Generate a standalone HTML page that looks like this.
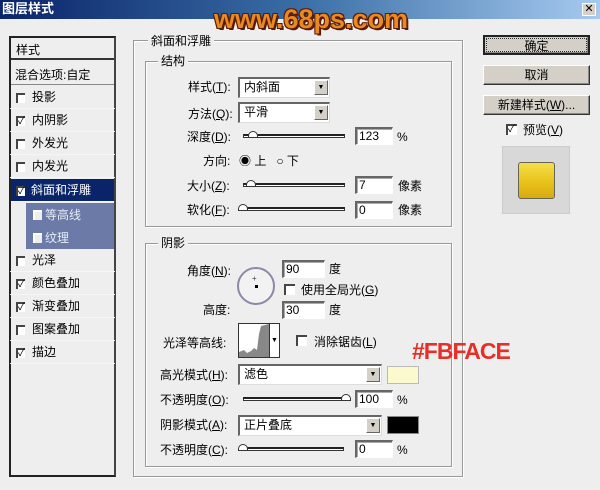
<!DOCTYPE html>
<html><head><meta charset="utf-8"><style>
*{margin:0;padding:0;box-sizing:border-box}
body{width:600px;height:490px;background:#eeeeee;position:relative;overflow:hidden;font-family:"Liberation Sans","Noto Sans CJK SC","WenQuanYi Zen Hei",sans-serif;font-size:12px;color:#000}
.a{position:absolute}
.t{position:absolute;white-space:nowrap;line-height:14px}
.title{left:0;top:0;width:600px;height:19px;background:linear-gradient(90deg,#0a246a,#3a6ea5 50%,#a6caf0)}
.frame{position:absolute;border:1px solid #999;box-shadow:1px 1px 0 #fff,inset 1px 1px 0 #fff}
.lbl{position:absolute;background:#eeeeee;padding:0 3px;line-height:14px}
.inp{position:absolute;background:#fff;border:1px solid #fff;border-top:2px solid #666;border-left:2px solid #666;box-shadow:inset 1px 1px 0 #aaa;padding-left:2px;line-height:14px;font-size:12px}
.dd{position:absolute;background:#fff;border-top:2px solid #666;border-left:2px solid #666;border-right:1px solid #ddd;border-bottom:1px solid #ddd;padding-left:4px;line-height:17px}
.dd b{position:absolute;right:1px;top:1px;width:14px;height:15px;background:#d4d0c8;border:1px solid;border-color:#fff #666 #666 #fff;font-size:7px;text-align:center;line-height:14px;font-weight:normal}
.sl{position:absolute;height:4px;border:1px solid #333;border-top:2px solid #222;background:#fff}
.th{position:absolute;width:10px;height:7px;border:1px solid #333;background:#fff;border-radius:5px 5px 0 0}
.btn{position:absolute;left:483px;width:107px;height:20px;background:#d4d0c8;border:1px solid;border-color:#fff #333 #333 #fff;box-shadow:inset -1px -1px 0 #888;text-align:center;line-height:18px}
.cb{position:absolute;width:9px;height:10px;border-left:2px solid #444;border-top:2px solid #444;background:#fff;font-size:10px;line-height:8px;color:#000}
.it{position:absolute;left:10px;width:105px;height:23px;line-height:23px;padding-left:22px;border-bottom:1px solid #f6f6f6}
.it .cb{left:6px;top:7px}
</style></head><body>
<div class="a title"></div>
<div class="t" style="left:2px;top:2px;color:#fff;font-weight:bold;font-size:13px">图层样式</div>
<div class="a" style="left:582px;top:3px;width:14px;height:13px;background:#d4d0c8;border:1px solid #fff;font-size:11px;line-height:11px;text-align:center">✕</div>
<div class="t" style="left:214px;top:6px;font-size:27px;line-height:26px;font-weight:bold;color:#e88a22;letter-spacing:0px;text-shadow:-1px -1px 0 #5a1a08,1px -1px 0 #5a1a08,-1px 1px 0 #5a1a08,1px 1px 0 #5a1a08,2px 2px 0 #5a1a08">www.68ps.com</div>

<div class="a" style="left:9px;top:36px;width:107px;height:441px;border:2px solid #222;border-right-color:#444;background:#eeeeee"></div>
<div class="a" style="left:11px;top:38px;width:103px;height:22px;border-bottom:2px solid #333"></div>
<div class="t" style="left:16px;top:43px">样式</div>
<div class="a" style="left:11px;top:62px;width:103px;height:23px;border-bottom:1px solid #888"></div>
<div class="t" style="left:15px;top:68px">混合选项:自定</div>
<div class="it" style="top:86px"><div class="cb"></div>投影</div>
<div class="it" style="top:109px"><div class="cb">✓</div>内阴影</div>
<div class="it" style="top:132px"><div class="cb"></div>外发光</div>
<div class="it" style="top:155px"><div class="cb"></div>内发光</div>
<div class="it" style="top:179px;left:11px;width:103px;background:#0a246a;color:#fff;padding-left:20px"><div class="cb" style="left:5px">✓</div>斜面和浮雕</div>
<div class="a" style="left:26px;top:203px;width:88px;height:46px;background:#6b7aa6"></div>
<div class="t" style="left:45px;top:205px;color:#e8ecf6;line-height:20px">等高线</div>
<div class="cb" style="left:33px;top:210px;border-color:#fff;background:#eee"></div>
<div class="t" style="left:45px;top:228px;color:#e8ecf6;line-height:20px">纹理</div>
<div class="cb" style="left:33px;top:233px;border-color:#fff;background:#eee"></div>
<div class="it" style="top:249px"><div class="cb"></div>光泽</div>
<div class="it" style="top:272px"><div class="cb">✓</div>颜色叠加</div>
<div class="it" style="top:295px"><div class="cb">✓</div>渐变叠加</div>
<div class="it" style="top:318px"><div class="cb"></div>图案叠加</div>
<div class="it" style="top:341px"><div class="cb">✓</div>描边</div>

<div class="frame" style="left:133px;top:40px;width:330px;height:437px"></div>
<div class="lbl" style="left:148px;top:34px">斜面和浮雕</div>
<div class="frame" style="left:145px;top:61px;width:307px;height:166px"></div>
<div class="lbl" style="left:158px;top:54px">结构</div>
<div class="frame" style="left:145px;top:243px;width:307px;height:224px"></div>
<div class="lbl" style="left:158px;top:236px">阴影</div>

<div class="t" style="left:188px;top:80px">样式(<u>T</u>):</div>
<div class="dd" style="left:238px;top:77px;width:92px;height:21px">内斜面<b>▼</b></div>
<div class="t" style="left:188px;top:107px">方法(<u>Q</u>):</div>
<div class="dd" style="left:238px;top:102px;width:92px;height:21px">平滑<b>▼</b></div>
<div class="t" style="left:187px;top:130px">深度(<u>D</u>):</div>
<div class="sl" style="left:243px;top:134px;width:102px"></div><div class="th" style="left:248px;top:131px"></div>
<div class="inp" style="left:355px;top:127px;width:38px;height:18px">123</div>
<div class="t" style="left:397px;top:130px">%</div>
<div class="t" style="left:203px;top:154px">方向:</div>
<div class="t" style="left:239px;top:154px">◉ 上 &nbsp;&nbsp;○ 下</div>
<div class="t" style="left:187px;top:179px">大小(<u>Z</u>):</div>
<div class="sl" style="left:243px;top:183px;width:102px"></div><div class="th" style="left:246px;top:180px"></div>
<div class="inp" style="left:355px;top:176px;width:38px;height:18px">7</div>
<div class="t" style="left:398px;top:179px">像素</div>
<div class="t" style="left:187px;top:203px">软化(<u>F</u>):</div>
<div class="sl" style="left:243px;top:207px;width:102px"></div><div class="th" style="left:238px;top:204px"></div>
<div class="inp" style="left:355px;top:201px;width:38px;height:18px">0</div>
<div class="t" style="left:398px;top:203px">像素</div>

<div class="t" style="left:187px;top:264px">角度(<u>N</u>):</div>
<div class="a" style="left:237px;top:267px;width:38px;height:38px;border:2px solid #8a8aa6;border-radius:50%;background:#f2f2f2"></div>
<div class="a" style="left:255px;top:285px;width:3px;height:3px;background:#000"></div>
<div class="t" style="left:252px;top:272px;font-size:8px;color:#444">+</div>
<div class="inp" style="left:282px;top:260px;width:43px;height:18px">90</div>
<div class="t" style="left:329px;top:262px">度</div>
<div class="cb" style="left:284px;top:284px;width:11px;height:11px"></div>
<div class="t" style="left:301px;top:283px">使用全局光(<u>G</u>)</div>
<div class="t" style="left:203px;top:303px">高度:</div>
<div class="inp" style="left:282px;top:301px;width:43px;height:18px">30</div>
<div class="t" style="left:329px;top:303px">度</div>
<div class="t" style="left:163px;top:336px">光泽等高线:</div>
<div class="a" style="left:238px;top:323px;width:42px;height:35px;border:1px solid #333;background:#fff"></div>
<svg class="a" style="left:239px;top:324px" width="30" height="33"><path d="M0 33 L0 28 L5 26 L8 29 L12 27 L15 24 L18 26 L20 10 L22 2 L30 0 L30 33Z" fill="#888"/></svg>
<div class="a" style="left:269px;top:324px;width:10px;height:33px;border-left:1px solid #333;background:#fff;font-size:7px;line-height:33px;text-align:center">▼</div>
<div class="cb" style="left:296px;top:335px;width:11px;height:11px"></div>
<div class="t" style="left:314px;top:335px">消除锯齿(<u>L</u>)</div>
<div class="t" style="left:412px;top:338px;font-size:23px;line-height:26px;font-weight:bold;color:#e5302a;letter-spacing:-1px">#FBFACE</div>

<div class="t" style="left:160px;top:368px">高光模式(<u>H</u>):</div>
<div class="dd" style="left:238px;top:364px;width:144px;height:21px">滤色<b>▼</b></div>
<div class="a" style="left:387px;top:366px;width:32px;height:18px;background:#fbface;border:1px solid #bbb"></div>
<div class="t" style="left:160px;top:393px">不透明度(<u>O</u>):</div>
<div class="sl" style="left:243px;top:397px;width:107px"></div><div class="th" style="left:341px;top:394px"></div>
<div class="inp" style="left:355px;top:390px;width:38px;height:18px">100</div>
<div class="t" style="left:397px;top:393px">%</div>
<div class="t" style="left:160px;top:418px">阴影模式(<u>A</u>):</div>
<div class="dd" style="left:238px;top:415px;width:144px;height:21px">正片叠底<b>▼</b></div>
<div class="a" style="left:387px;top:416px;width:32px;height:18px;background:#000;border:1px solid #888"></div>
<div class="t" style="left:160px;top:443px">不透明度(<u>C</u>):</div>
<div class="sl" style="left:242px;top:447px;width:102px"></div><div class="th" style="left:238px;top:444px"></div>
<div class="inp" style="left:355px;top:440px;width:38px;height:18px">0</div>
<div class="t" style="left:397px;top:443px">%</div>

<div class="btn" style="top:35px;outline:1px dotted #333;outline-offset:-4px;border:2px solid #222">确定</div>
<div class="btn" style="top:65px">取消</div>
<div class="btn" style="top:95px">新建样式(<u>W</u>)...</div>
<div class="cb" style="left:506px;top:124px;width:11px;height:11px">✓</div>
<div class="t" style="left:523px;top:123px">预览(<u>V</u>)</div>
<div class="a" style="left:502px;top:146px;width:68px;height:68px;background:#d8d8d8;border:1px solid #ccc"></div>
<div class="a" style="left:518px;top:162px;width:37px;height:37px;border-radius:3px;border:1px solid #665;background:linear-gradient(#f6de4a,#e8c21a 55%,#d8aa10)"></div>
</body></html>
